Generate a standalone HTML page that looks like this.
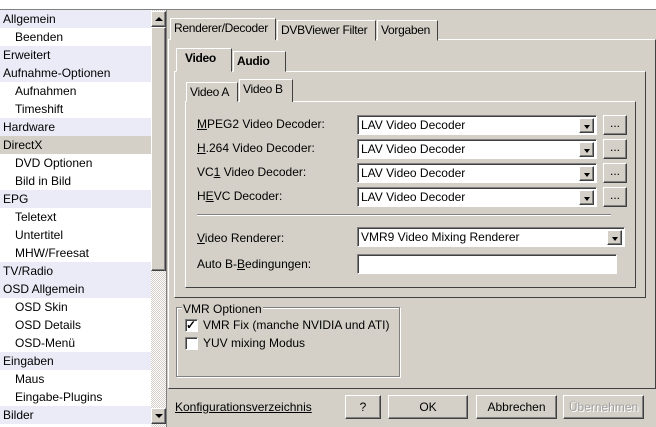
<!DOCTYPE html><html><head><style>
*{box-sizing:border-box;margin:0;padding:0}
body{width:656px;height:427px;background:#d4d0c8;font:12px "Liberation Sans",sans-serif;color:#000;position:relative;overflow:hidden}
.a{position:absolute;white-space:nowrap}
.top{left:0;top:0;width:656px;height:10px;background:#fff;border-bottom:1px solid #808080}
.list{left:0;top:10px;width:151px;height:417px;background:#fff}
.it{height:18px;line-height:18px;padding-left:3px;white-space:nowrap}
.c{background:#ebebf7}.s{padding-left:15px}.sel{background:#d4d0c8}
.sb{left:151px;top:10px;width:15px;height:417px;background:repeating-conic-gradient(#d4d0c8 0 25%,#fff 0 50%) 0 0/2px 2px}
.btn{background:#d4d0c8;border:1px solid;border-color:#fff #404040 #404040 #fff;box-shadow:inset -1px -1px #808080}
.tab{background:#d4d0c8;border:1px solid;border-color:#fff #404040 transparent #fff;height:21px;line-height:19px;padding:0 3px;letter-spacing:-0.3px;overflow:hidden}
.pan{border:1px solid;border-color:#fff #404040 #404040 #fff}
.cb{background:#fff;border:1px solid;border-color:#808080 #fff #fff #808080;box-shadow:inset 1px 1px #404040;height:20px;line-height:18px;padding-left:3px}
.dd{position:absolute;right:2px;top:2px;width:15px;height:15px}
.dd:after{content:"";position:absolute;left:4px;top:6px;border:3px solid transparent;border-top:4px solid #000;border-bottom:0}
.lbl{position:absolute;left:197px}
u{text-decoration:underline}
</style></head><body>
<div class="a top"></div>
<div class="a list">
<div class="it c">Allgemein</div><div class="it s">Beenden</div><div class="it c">Erweitert</div><div class="it c">Aufnahme-Optionen</div><div class="it s">Aufnahmen</div><div class="it s">Timeshift</div><div class="it c">Hardware</div><div class="it sel">DirectX</div><div class="it s">DVD Optionen</div><div class="it s">Bild in Bild</div><div class="it c">EPG</div><div class="it s">Teletext</div><div class="it s">Untertitel</div><div class="it s">MHW/Freesat</div><div class="it c">TV/Radio</div><div class="it c">OSD Allgemein</div><div class="it s">OSD Skin</div><div class="it s">OSD Details</div><div class="it s">OSD-Menü</div><div class="it c">Eingaben</div><div class="it s">Maus</div><div class="it s">Eingabe-Plugins</div><div class="it c">Bilder</div>
</div>
<div class="a sb"></div>
<div class="a btn" style="left:151px;top:11px;width:15px;height:16px"></div>
<div class="a" style="left:155px;top:17px;border:4px solid transparent;border-bottom:4px solid #000;border-top:0"></div>
<div class="a btn" style="left:151px;top:27px;width:15px;height:244px"></div>
<div class="a btn" style="left:151px;top:408px;width:15px;height:16px"></div>
<div class="a" style="left:155px;top:414px;border:4px solid transparent;border-top:4px solid #000;border-bottom:0"></div>
<div class="a" style="left:166px;top:10px;width:1px;height:417px;background:#808080"></div>

<div class="a pan" style="left:168px;top:39px;width:488px;height:350px"></div>
<div class="a tab" style="left:170px;top:18px;width:106px;height:22px;border-bottom:0">Renderer/Decoder</div>
<div class="a tab" style="left:277px;top:20px;width:99px">DVBViewer Filter</div>
<div class="a tab" style="left:377px;top:20px;width:61px">Vorgaben</div>

<div class="a pan" style="left:174px;top:71px;width:472px;height:227px"></div>
<div class="a tab" style="left:176px;top:48px;width:56px;height:24px;font-weight:bold;padding-left:8px">Video</div>
<div class="a tab" style="left:233px;top:51px;width:53px;font-weight:bold">Audio</div>

<div class="a pan" style="left:185px;top:101px;width:451px;height:187px"></div>
<div class="a tab" style="left:186px;top:82px;width:52px;height:20px">Video A</div>
<div class="a tab" style="left:239px;top:79px;width:54px;height:23px;border-bottom:0">Video B</div>

<div class="lbl" style="top:117px"><u>M</u>PEG2 Video Decoder:</div>
<div class="lbl" style="top:141px"><u>H</u>.264 Video Decoder:</div>
<div class="lbl" style="top:165px">VC<u>1</u> Video Decoder:</div>
<div class="lbl" style="top:189px">H<u>E</u>VC Decoder:</div>
<div class="a cb" style="left:357px;top:115px;width:240px">LAV Video Decoder<div class="dd btn"></div></div>
<div class="a cb" style="left:357px;top:139px;width:240px">LAV Video Decoder<div class="dd btn"></div></div>
<div class="a cb" style="left:357px;top:163px;width:240px">LAV Video Decoder<div class="dd btn"></div></div>
<div class="a cb" style="left:357px;top:187px;width:240px">LAV Video Decoder<div class="dd btn"></div></div>
<div class="a btn" style="left:603px;top:115px;width:24px;height:20px;text-align:center;line-height:14px">...</div>
<div class="a btn" style="left:603px;top:139px;width:24px;height:20px;text-align:center;line-height:14px">...</div>
<div class="a btn" style="left:603px;top:163px;width:24px;height:20px;text-align:center;line-height:14px">...</div>
<div class="a btn" style="left:603px;top:187px;width:24px;height:20px;text-align:center;line-height:14px">...</div>
<div class="a" style="left:197px;top:214px;width:414px;height:2px;border-top:1px solid #808080;border-bottom:1px solid #fff"></div>
<div class="lbl" style="top:231px"><u>V</u>ideo Renderer:</div>
<div class="lbl" style="top:257px">Auto B-<u>B</u>edingungen:</div>
<div class="a cb" style="left:357px;top:227px;width:268px">VMR9 Video Mixing Renderer<div class="dd btn"></div></div>
<div class="a cb" style="left:357px;top:254px;width:260px"></div>

<div class="a" style="left:176px;top:307px;width:224px;height:70px;border:1px solid #808080;box-shadow:1px 1px #fff,inset 1px 1px #fff"></div>
<div class="a" style="left:182px;top:302px;background:#d4d0c8;padding:0 1px">VMR Optionen</div>
<div class="a cb" style="left:185px;top:319px;width:13px;height:13px;padding:0"><span style="position:absolute;left:0;top:-4px;font-size:12px;font-weight:bold">✓</span></div>
<div class="a" style="left:203px;top:318px">VMR Fix (manche NVIDIA und ATI)</div>
<div class="a cb" style="left:185px;top:337px;width:13px;height:13px;padding:0"></div>
<div class="a" style="left:203px;top:336px">YUV mixing Modus</div>

<div class="a" style="left:175px;top:400px"><u>Konfigurationsverzeichnis</u></div>
<div class="a btn" style="left:345px;top:395px;width:36px;height:24px;text-align:center;line-height:22px">?</div>
<div class="a btn" style="left:388px;top:395px;width:80px;height:24px;text-align:center;line-height:22px">OK</div>
<div class="a btn" style="left:476px;top:395px;width:81px;height:24px;text-align:center;line-height:22px">Abbrechen</div>
<div class="a btn" style="left:563px;top:395px;width:81px;height:24px;text-align:center;line-height:22px;color:#a0a0a0;text-shadow:1px 1px #fff">Übernehmen</div>
</body></html>
